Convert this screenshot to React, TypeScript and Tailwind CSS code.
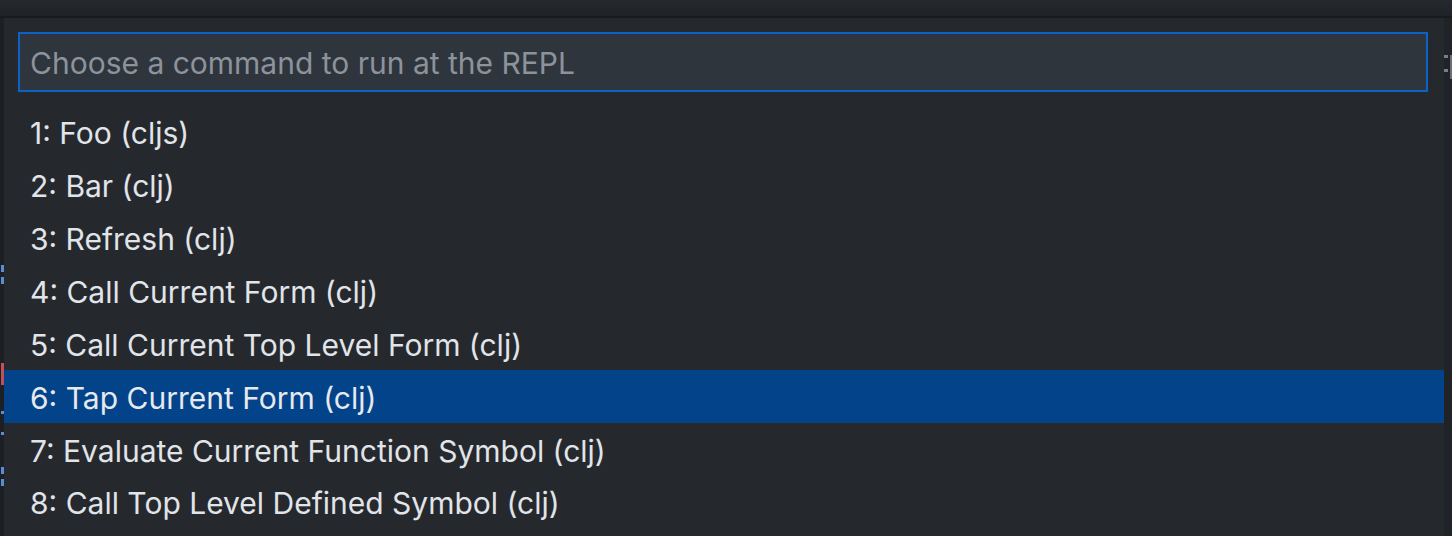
import React from "react";

const items = [
  "1: Foo (cljs)",
  "2: Bar (clj)",
  "3: Refresh (clj)",
  "4: Call Current Form (clj)",
  "5: Call Current Top Level Form (clj)",
  "6: Tap Current Form (clj)",
  "7: Evaluate Current Function Symbol (clj)",
  "8: Call Top Level Defined Symbol (clj)",
];

export default function App() {
  return (
    <div
      className="w-[1452px] h-[536px] overflow-hidden bg-[#1f2226] flex flex-col"
      style={{ fontFamily: "Inter, 'Noto Sans', sans-serif" }}
    >
      {/* top editor strip */}
      <div className="h-[18px] shrink-0 bg-gradient-to-b from-[#25282d] to-[#1f2226] border-b-[2px] border-[#181a1d]" />
      <div className="flex flex-1 min-h-0">
        {/* left gutter */}
        <div className="w-[4px] shrink-0 bg-[#1c1f23] flex flex-col items-end pt-[247px] gap-[5px]">
          <div className="w-[3px] h-[7px] bg-[#5b8ed0]" />
          <div className="w-[3px] h-[7px] bg-[#5b8ed0]" />
          <div className="w-[3px] h-[22px] mt-[74px] bg-[#c0505a]" />
          <div className="w-[3px] h-[3px] mt-[21px] bg-[#5b8ed0]" />
          <div className="w-[3px] h-[3px] mt-[13px] bg-[#5b8ed0]" />
          <div className="w-[3px] h-[7px] mt-[27px] bg-[#5b8ed0]" />
          <div className="w-[3px] h-[7px] bg-[#5b8ed0]" />
        </div>
        {/* quick pick panel */}
        <div className="w-[1440px] shrink-0 bg-[#25292e] flex flex-col">
          <div className="pt-[14px] pl-[14px] pr-[16px] pb-[14px]">
            <div className="h-[60px] border-2 border-[#0b63c9] bg-[#2f353d] flex items-center px-[10px]">
              <span className="text-[30px] text-[#8c939b] leading-none pt-[2px]">
                Choose a command to run at the REPL
              </span>
            </div>
          </div>
          <div className="flex flex-col">
            {items.map((t, i) => (
              <div
                key={t}
                className={
                  "h-[52.86px] flex items-center pl-[26px] pt-[2px] text-[30px] leading-none " +
                  (i === 5 ? "bg-[#03438a] text-[#e6e9ed]" : "text-[#e1e4e8]")
                }
              >
                {t}
              </div>
            ))}
          </div>
        </div>
        {/* right editor strip */}
        <div className="flex-1 bg-[#1f2226] flex pt-[37px] gap-[2px]">
          <div className="flex flex-col gap-[11px]">
            <div className="w-[4px] h-[3px] bg-[#7a7d82]" />
            <div className="w-[4px] h-[3px] bg-[#7a7d82]" />
          </div>
          <div className="w-[2px] h-[24px] bg-[#6a6d72]" />
        </div>
      </div>
    </div>
  );
}
